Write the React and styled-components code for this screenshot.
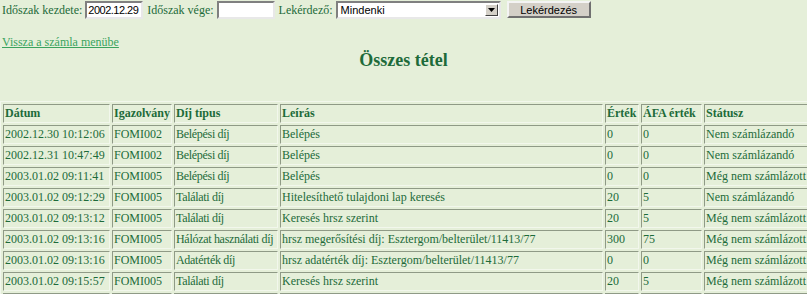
import React from 'react'
import styled, { createGlobalStyle } from 'styled-components'

const GlobalStyle = createGlobalStyle`
  html, body {
    margin: 0;
    padding: 0;
    overflow: hidden;
  }
  body {
    background-color: #e5efd9;
    font-family: "Liberation Serif", "Times New Roman", serif;
    font-size: 12px;
    color: #1d6b3a;
  }
`

const columns = [
  { key: 'date', title: 'Dátum', width: 103 },
  { key: 'card', title: 'Igazolvány', width: 56 },
  { key: 'fee', title: 'Díj típus', width: 100, tight: true },
  { key: 'desc', title: 'Leírás', width: 319 },
  { key: 'value', title: 'Érték', width: 30 },
  { key: 'vat', title: 'ÁFA érték', width: 57 },
  { key: 'status', title: 'Státusz', width: 100 },
]

const rows = [
  ['2002.12.30 10:12:06', 'FOMI002', 'Belépési díj', 'Belépés', '0', '0', 'Nem számlázandó'],
  ['2002.12.31 10:47:49', 'FOMI002', 'Belépési díj', 'Belépés', '0', '0', 'Nem számlázandó'],
  ['2003.01.02 09:11:41', 'FOMI005', 'Belépési díj', 'Belépés', '0', '0', 'Még nem számlázott'],
  ['2003.01.02 09:12:29', 'FOMI005', 'Találati díj', 'Hitelesíthető tulajdoni lap keresés', '20', '5', 'Nem számlázandó'],
  ['2003.01.02 09:13:12', 'FOMI005', 'Találati díj', 'Keresés hrsz szerint', '20', '5', 'Még nem számlázott'],
  ['2003.01.02 09:13:16', 'FOMI005', 'Hálózat használati díj', 'hrsz megerősítési díj: Esztergom/belterület/11413/77', '300', '75', 'Még nem számlázott'],
  ['2003.01.02 09:13:16', 'FOMI005', 'Adatérték díj', 'hrsz adatérték díj: Esztergom/belterület/11413/77', '0', '0', 'Még nem számlázott'],
  ['2003.01.02 09:15:57', 'FOMI005', 'Találati díj', 'Keresés hrsz szerint', '20', '5', 'Még nem számlázott'],
  ['2003.01.02 09:16:02', 'FOMI005', 'Találati díj', 'Keresés hrsz szerint', '20', '5', 'Még nem számlázott'],
]

const App = () => {
  return (
    <Page>
      <GlobalStyle />
      <QueryForm>
        <Label>Időszak kezdete:</Label>
        <TextInput type="text" defaultValue="2002.12.29" />
        <Label>Időszak vége:</Label>
        <TextInput type="text" defaultValue="" />
        <Label>Lekérdező:</Label>
        <SelectBox>
          <span>Mindenki</span>
          <DropButton>
            <svg width="7" height="4" viewBox="0 0 7 4">
              <path d="M0 0h7L3.5 4z" fill="#000" />
            </svg>
          </DropButton>
        </SelectBox>
        <SubmitButton type="button">Lekérdezés</SubmitButton>
      </QueryForm>

      <BackLink href="#">Vissza a számla menübe</BackLink>

      <Title>Összes tétel</Title>

      <ItemTable>
        <thead>
          <tr>
            {columns.map(col => (
              <HeadCell key={col.key} $width={col.width}>{col.title}</HeadCell>
            ))}
          </tr>
        </thead>
        <tbody>
          {rows.map((row, idx) => (
            <tr key={idx}>
              {row.map((cell, i) => (
                <Cell key={i} $tight={columns[i].tight}>{cell}</Cell>
              ))}
            </tr>
          ))}
        </tbody>
      </ItemTable>
    </Page>
  )
}

const Page = styled.div`
  width: 807px;
  height: 294px;
  overflow: hidden;
`

const QueryForm = styled.form`
  display: flex;
  align-items: center;
  gap: 3px;
  padding: 1px 0 0 2px;
  margin: 0;
  height: 18px;
`

const Label = styled.span`
  white-space: nowrap;
  line-height: 18px;
`

const TextInput = styled.input`
  box-sizing: border-box;
  width: 58px;
  height: 18px;
  padding: 0 1px;
  margin: 0 1px 0 0;
  font-family: "Liberation Sans", Arial, sans-serif;
  font-size: 11px;
  letter-spacing: -0.5px;
  color: #000;
  background: #fff;
  border: 2px solid;
  border-color: #808080 #e8e8e8 #e8e8e8 #808080;
  outline: none;
`

const SelectBox = styled.div`
  box-sizing: border-box;
  display: flex;
  align-items: center;
  justify-content: space-between;
  width: 165px;
  height: 18px;
  padding: 0 1px 0 3px;
  font-family: "Liberation Sans", Arial, sans-serif;
  font-size: 11px;
  color: #000;
  background: #fff;
  border: 2px solid;
  border-color: #808080 #e8e8e8 #e8e8e8 #808080;
`

const DropButton = styled.span`
  box-sizing: border-box;
  display: flex;
  align-items: center;
  justify-content: center;
  width: 13px;
  height: 12px;
  background: #d4d0c8;
  border: 1px solid;
  border-color: #fff #404040 #404040 #fff;
`

const SubmitButton = styled.button`
  box-sizing: border-box;
  width: 84px;
  height: 17px;
  margin: -1px 0 0 3px;
  padding: 0;
  font-family: "Liberation Sans", Arial, sans-serif;
  font-size: 11px;
  color: #000;
  background: #d4d0c8;
  border: 2px solid;
  border-color: #f4f4f4 #707070 #707070 #f4f4f4;
`

const BackLink = styled.a`
  display: inline-block;
  margin: 16px 0 0 2px;
  color: #3aa35e;
  text-decoration: underline;
  line-height: 14px;
`

const Title = styled.h2`
  margin: 0;
  text-align: center;
  font-size: 18px;
  font-weight: bold;
  line-height: 20px;
  color: #1d6b3a;
`

const ItemTable = styled.table`
  margin-top: 31px;
  border-collapse: separate;
  border-spacing: 2px;
  border: 1px solid;
  border-color: #f2f7ec #8f9a86 #8f9a86 #f2f7ec;
  table-layout: fixed;
  width: 811px;
  font-size: 12px;
`

const HeadCell = styled.th`
  width: ${props => props.$width}px;
  text-align: left;
  font-weight: bold;
  padding: 1px;
  height: 15px;
  line-height: 15px;
  white-space: nowrap;
  border: 1px solid;
  border-color: #8f9a86 #f2f7ec #f2f7ec #8f9a86;
`

const Cell = styled.td`
  padding: 1px;
  height: 15px;
  line-height: 15px;
  white-space: nowrap;
  overflow: hidden;
  letter-spacing: ${props => (props.$tight ? '-0.3px' : 'normal')};
  border: 1px solid;
  border-color: #8f9a86 #f2f7ec #f2f7ec #8f9a86;
`

export default App
